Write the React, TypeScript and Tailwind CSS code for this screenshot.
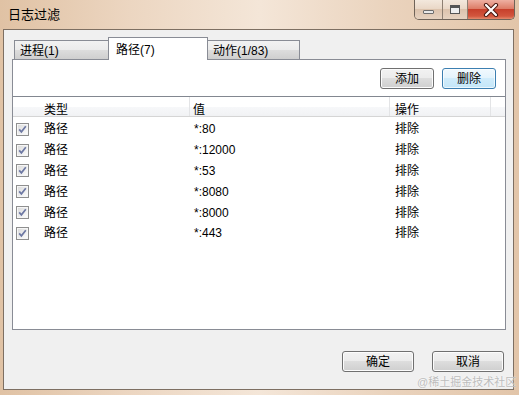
import type { ReactNode } from 'react'

const rows = ['*:80', '*:12000', '*:53', '*:8080', '*:8000', '*:443']

function CheckBox() {
  return (
    <svg width="13" height="13" viewBox="0 0 13 13" className="shrink-0">
      <defs>
        <linearGradient id="cbfill" x1="0" y1="0" x2="1" y2="1">
          <stop offset="0" stopColor="#dcdcdc" />
          <stop offset="1" stopColor="#fbfbfb" />
        </linearGradient>
      </defs>
      <rect x="0.5" y="0.5" width="12" height="12" fill="#f6f6f6" stroke="#8f8f8f" />
      <rect x="2" y="2" width="9" height="9" fill="url(#cbfill)" />
      <path d="M3.2 6.4 L5.4 8.9 L9.8 3.3" fill="none" stroke="#6d78a3" strokeWidth="1.7" />
    </svg>
  )
}

function Button({ children, primary, className }: { children: ReactNode; primary?: boolean; className: string }) {
  return (
    <button
      className={
        primary
          ? `h-[21px] rounded-[3px] border border-[#3c7fb1] bg-[linear-gradient(#f1f9fe,#e3f3fc_50%,#d0ecfb_50%,#c4e6f8)] shadow-[inset_0_0_0_1px_#ffffffb0] text-[12px] leading-none text-black ${className}`
          : `h-[21px] rounded-[3px] border border-[#707070] bg-[linear-gradient(#f2f2f2,#ebebeb_50%,#dddddd_50%,#cfcfcf)] shadow-[inset_0_0_0_1px_#fcfcfc] text-[12px] leading-none text-black ${className}`
      }
    >
      {children}
    </button>
  )
}

function CaptionButtons() {
  return (
    <div className="mr-[4px] flex h-[20px] overflow-hidden rounded-b-[5px] border border-t-0 border-[#6f6358]">
      <div className="flex w-[28px] items-center justify-center border-r border-[#8d7f72] bg-[linear-gradient(#f3e8dd,#ead8c7_45%,#dcc3ad_50%,#e6d2c0)]">
        <div className="mt-[5px] h-[4px] w-[11px] rounded-[1px] border border-[#6d6d6d] bg-[#e8e8e8]" />
      </div>
      <div className="flex w-[25px] items-center justify-center border-r border-[#8d7f72] bg-[linear-gradient(#f3e8dd,#ead8c7_45%,#dcc3ad_50%,#e6d2c0)]">
        <div className="h-[9px] w-[10px] border border-t-[3px] border-[#555] bg-[#eee]" />
      </div>
      <div className="flex w-[46px] items-center justify-center bg-[linear-gradient(#eeb0a2,#dd7d68_45%,#c7402c_50%,#d2563e_85%,#e48a6c)]">
        <svg width="16" height="14" viewBox="0 0 16 14">
          <path d="M3 2 L13 12 M13 2 L3 12" stroke="#4a1a12" strokeWidth="4.2" strokeLinecap="round" />
          <path d="M3 2 L13 12 M13 2 L3 12" stroke="#ffffff" strokeWidth="2.2" strokeLinecap="round" />
        </svg>
      </div>
    </div>
  )
}

export default function App() {
  return (
    <div className="relative h-[395px] w-[519px] overflow-hidden bg-[linear-gradient(90deg,#e0c2a4,#ecd6c1_25%,#f4e6d8_50%,#ead3bd_75%,#e2c5a9)] font-['Liberation_Sans','Noto_Sans_CJK_SC',sans-serif] text-black">
      <div className="flex h-[29px] items-start">
        <div className="pl-[8px] pt-[7px] text-[13px] leading-[16px]">日志过滤</div>
        <div className="ml-auto">
          <CaptionButtons />
        </div>
      </div>

      <div className="ml-[3px] flex h-[361px] w-[511px] flex-col border border-[#7d6f62] bg-[#f0f0f0]">
        <div className="ml-[8px] w-[494px] pt-[7px]">
          <div className="flex h-[22px] items-end pl-[2px]">
            <div className="flex h-[19px] w-[95px] items-center border border-b-0 border-[#898c95] bg-[linear-gradient(#f2f2f2,#ebebeb_50%,#dddddd_50%,#cfcfcf)] pl-[5px] pt-[1px] text-[12px]">
              进程(1)
            </div>
            <div className="relative z-10 -mb-px -ml-px flex h-[23px] w-[100px] items-start border border-b-0 border-[#898c95] bg-white pl-[7px] pt-[3px] text-[12px]">
              路径(7)
            </div>
            <div className="-ml-px flex h-[19px] w-[93px] items-center border border-b-0 border-[#898c95] bg-[linear-gradient(#f2f2f2,#ebebeb_50%,#dddddd_50%,#cfcfcf)] pl-[5px] pt-[1px] text-[12px]">
              动作(1/83)
            </div>
          </div>

          <div className="flex h-[271px] flex-col border border-[#898c95] bg-white">
            <div className="flex justify-end gap-[8px] pr-[9px] pt-[8px]">
              <Button className="w-[54px]">添加</Button>
              <Button primary className="w-[54px]">删除</Button>
            </div>

            <div className="mt-[7px] flex-1 border-t border-[#828790]">
              <div className="flex h-[20px] border-b border-[#d5d5d5] bg-[linear-gradient(#ffffff,#ffffff_50%,#f7f8fa_50%,#f1f2f4)] text-[12px]">
                <div className="w-[177px] border-r border-[#e3e4e6] pl-[31px] pt-[4px]">类型</div>
                <div className="w-[200px] border-r border-[#e3e4e6] pl-[3px] pt-[4px]">值</div>
                <div className="w-[101px] border-r border-[#e3e4e6] pl-[5px] pt-[4px]">操作</div>
              </div>
              <div className="pt-[2px]">
                {rows.map((v) => (
                  <div key={v} className="flex h-[20.8px] items-center text-[12px]">
                    <div className="flex w-[177px] items-center pl-[3px]">
                      <CheckBox />
                      <span className="ml-[15px]">路径</span>
                    </div>
                    <div className="w-[200px] pl-[4px]">{v}</div>
                    <div className="w-[101px] pl-[5px]">排除</div>
                  </div>
                ))}
              </div>
            </div>
          </div>
        </div>

        <div className="mt-[21px] flex justify-end gap-[18px] pr-[9px]">
          <Button className="w-[72px]">确定</Button>
          <Button className="w-[72px]">取消</Button>
        </div>
      </div>

      <div className="absolute left-[417px] top-[375px] text-[11px] leading-[14px] text-[#bdbdbd] [text-shadow:0_0_2px_#ffffff]">
        @稀土掘金技术社区
      </div>
    </div>
  )
}
